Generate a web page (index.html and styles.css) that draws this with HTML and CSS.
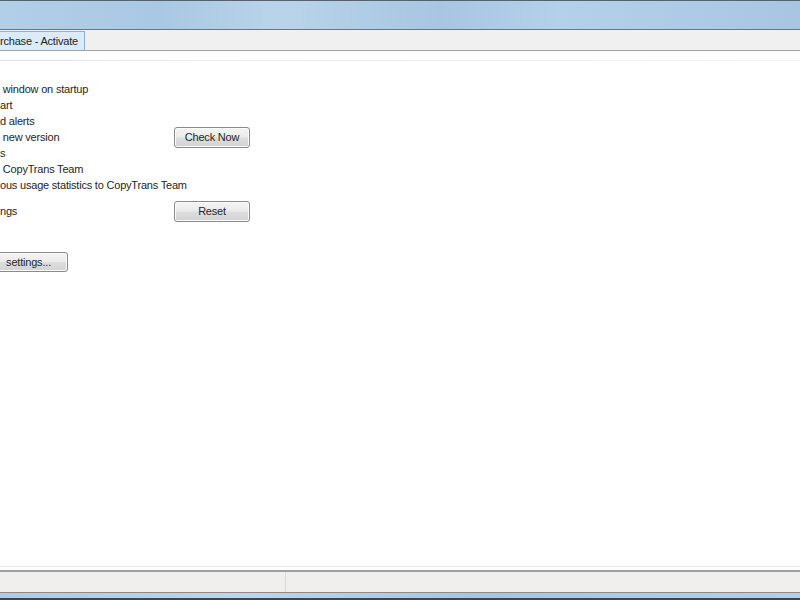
FILE: index.html
```html
<!DOCTYPE html>
<html>
<head>
<meta charset="utf-8">
<link rel="stylesheet" href="styles.css">
</head>
<body>
<div class="window">
  <div class="frame-top"></div>
  <div class="tabbar">
    <div class="tab">rchase - Activate</div>
  </div>
  <div class="content">
    <div class="sep"></div>
    <div class="opts">
      <div class="row">&nbsp;window on startup</div>
      <div class="row">art</div>
      <div class="row">d alerts</div>
      <div class="row with-btn"><span>&nbsp;new version</span><button class="btn">Check Now</button></div>
      <div class="row">s</div>
      <div class="row">&nbsp;CopyTrans Team</div>
      <div class="row">ous usage statistics to CopyTrans Team</div>
      <div class="row with-btn reset-row"><span>ngs</span><button class="btn">Reset</button></div>
    </div>
    <button class="btn settings">settings...</button>
    <div class="spacer"></div>
    <div class="sep bottom"></div>
  </div>
  <div class="statusbar">
    <div class="cell first"></div>
    <div class="cell"></div>
  </div>
  <div class="frame-bottom"></div>
</div>
</body>
</html>
```

FILE: styles.css
```css
html, body {
  margin: 0;
  padding: 0;
  width: 800px;
  height: 600px;
  overflow: hidden;
  background: #ffffff;
}
.window {
  width: 800px;
  height: 600px;
  display: flex;
  flex-direction: column;
  font-family: "Liberation Sans", Arial, sans-serif;
  font-size: 11px;
  letter-spacing: -0.2px;
  color: #262626;
}
.frame-top {
  height: 28px;
  border-top: 1px solid #56626e;
  background: linear-gradient(90deg, #b2cfe8 0%, #a9c8e3 20%, #b9d4ea 35%, #a8c6e2 55%, #b3d1ea 70%, #a8c6e2 100%);
  flex: none;
}
.tabbar {
  height: 20px;
  border-top: 1px solid #6c7580;
  border-bottom: 1px solid #a3a3a3;
  background: #f0f0f0;
  display: flex;
  align-items: flex-end;
  flex: none;
}
.tab {
  height: 18px;
  line-height: 19px;
  padding: 0 6px 0 0;
  background: #dbebf7;
  border: 1px solid #8fb1cf;
  border-left: none;
  border-bottom: none;
  white-space: nowrap;
}
.content {
  flex: 1;
  display: flex;
  flex-direction: column;
  background: #ffffff;
}
.sep {
  height: 1px;
  margin-top: 9px;
  background: linear-gradient(90deg, #e6e6e6, #eeeeee 60%, #f4f4f4);
}
.opts {
  margin-top: 20px;
  display: flex;
  flex-direction: column;
}
.row {
  height: 16px;
  line-height: 16px;
  white-space: nowrap;
}
.with-btn {
  display: flex;
  align-items: center;
}
.with-btn span {
  width: 174px;
}
.reset-row {
  margin-top: 10px;
}
.btn {
  font-family: "Liberation Sans", Arial, sans-serif;
  font-size: 11px;
  letter-spacing: -0.2px;
  color: #262626;
  width: 76px;
  height: 21px;
  padding: 0;
  border: 1px solid #8a8a8a;
  border-radius: 3px;
  background: linear-gradient(#f4f4f4 0%, #ebebeb 48%, #dddddd 52%, #d3d3d3 100%);
  box-shadow: inset 0 0 0 1px #fbfbfb;
}
.settings {
  margin-top: 33px;
  width: 76px;
  height: 20px;
  margin-left: -8px;
  text-align: right;
  padding-right: 16px;
}
.spacer {
  flex: 1;
}
.sep.bottom {
  margin-top: 0;
  margin-bottom: 3px;
  background: #ececec;
}
.statusbar {
  height: 20px;
  flex: none;
  border-top: 2px solid #a0a0a0;
  border-bottom: 1px solid #8c8c8c;
  background: #f0efee;
  display: flex;
}
.cell.first {
  width: 285px;
  border-right: 1px solid #d9d9d9;
}
.frame-bottom {
  flex: none;
  height: 5px;
  background: linear-gradient(90deg, #aecbe3, #bcd6ea 30%, #a8c5e0 60%, #b4d0e8);
  border-bottom: 2px solid #3c4652;
}
```
